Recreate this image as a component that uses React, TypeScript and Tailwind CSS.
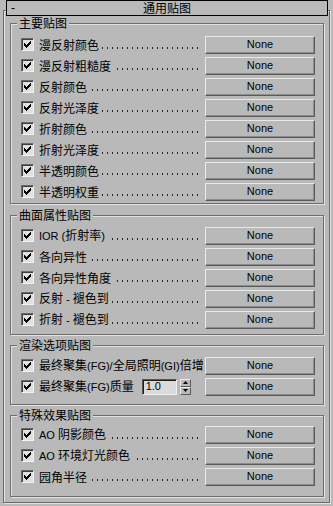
import type { ReactNode } from "react";

const CHECK_PIXELS = [
  "......x",
  ".....xx",
  "x...xxx",
  "xx.xxx.",
  "xxxxx..",
  ".xxx...",
  "..x....",
];

function CheckBox() {
  return (
    <div className="h-[13px] w-[13px] shrink-0 border border-t-[#6a6a6a] border-l-[#6a6a6a] border-b-[#f2f2f2] border-r-[#f2f2f2] bg-[#e0e0e0] shadow-[inset_1px_1px_0_#3e3e3e]">
      <svg width="11" height="11" viewBox="0 0 11 11" className="block">
        {CHECK_PIXELS.map((row, y) =>
          row.split("").map((c, x) =>
            c === "x" ? (
              <rect key={`${x}-${y}`} x={x + 2} y={y + 2} width="1" height="1" fill="#000" />
            ) : null,
          ),
        )}
      </svg>
    </div>
  );
}

function NoneButton() {
  return (
    <button
      type="button"
      className="flex h-[18px] w-[110px] shrink-0 items-center justify-center border border-t-[#e9e9e9] border-l-[#e9e9e9] border-b-[#5a5a5a] border-r-[#5a5a5a] bg-[#b9b9b9] font-['Liberation_Sans',sans-serif] text-[11px] leading-none text-black shadow-[inset_-1px_-1px_0_#8c8c8c]"
    >
      None
    </button>
  );
}

// dotted leader drawn from the right edge so the last dot lines up before the button
function Leader() {
  return (
    <div className="mt-[7px] mr-[7px] ml-[3px] h-[2px] min-w-0 flex-1 bg-[repeating-linear-gradient(to_left,#262626_0_1px,transparent_1px_5px)]" />
  );
}

// latin runs in the labels are set smaller, like the Tahoma text of the original
function Label({ text }: { text: string }) {
  const parts = text.split(/([\x20-\x7E]+)/).filter(Boolean);
  return (
    <span className="ml-[5px] shrink-0 whitespace-pre">
      {parts.map((part, i) =>
        /^[\x20-\x7E]+$/.test(part) ? (
          <span key={i} className="font-['Liberation_Sans',sans-serif] text-[11px]">
            {part}
          </span>
        ) : (
          <span key={i}>{part}</span>
        ),
      )}
    </span>
  );
}

interface MapRowProps {
  label: string;
  dots?: boolean;
  children?: ReactNode;
}

function MapRow({ label, dots = true, children }: MapRowProps) {
  return (
    <div className="flex h-[21px] items-center pr-[8px] pl-[10px]">
      <CheckBox />
      <Label text={label} />
      {children}
      {dots ? <Leader /> : <div className="flex-1" />}
      <NoneButton />
    </div>
  );
}

interface GroupProps {
  title: string;
  className: string;
  children: ReactNode;
}

function Group({ title, className, children }: GroupProps) {
  return (
    <div
      className={`relative ml-[6px] w-[314px] border border-[#6e6e6e] shadow-[inset_1px_1px_0_#e2e2e2,1px_1px_0_#e2e2e2] ${className}`}
    >
      <span className="absolute top-[-9px] left-[6px] bg-[#b9b9b9] px-[2px] leading-[16px]">
        {title}
      </span>
      {children}
    </div>
  );
}

function SpinnerInput() {
  return (
    <div className="ml-[8px] flex items-center">
      <div className="flex h-[16px] w-[35px] items-center border border-t-[#555] border-l-[#555] border-b-[#f0f0f0] border-r-[#f0f0f0] bg-[#dadada] pl-[3px] font-['Liberation_Sans',sans-serif] text-[11px] leading-none shadow-[inset_1px_1px_0_#1e1e1e]">
        1.0
      </div>
      <div className="ml-[3px] flex h-[16px] w-[11px] flex-col">
        <div className="flex h-[8px] items-center justify-center border border-t-[#eaeaea] border-l-[#eaeaea] border-b-[#5a5a5a] border-r-[#5a5a5a]">
          <svg width="5" height="3" viewBox="0 0 5 3" className="block">
            <path d="M2.5 0 L5 3 L0 3 Z" fill="#000" />
          </svg>
        </div>
        <div className="flex h-[8px] items-center justify-center border border-t-[#eaeaea] border-l-[#eaeaea] border-b-[#5a5a5a] border-r-[#5a5a5a]">
          <svg width="5" height="3" viewBox="0 0 5 3" className="block">
            <path d="M0 0 L5 0 L2.5 3 Z" fill="#000" />
          </svg>
        </div>
      </div>
    </div>
  );
}

const MAIN_MAPS = [
  "漫反射颜色",
  "漫反射粗糙度",
  "反射颜色",
  "反射光泽度",
  "折射颜色",
  "折射光泽度",
  "半透明颜色",
  "半透明权重",
];

const SURFACE_MAPS = [
  "IOR (折射率)",
  "各向异性",
  "各向异性角度",
  "反射 - 褪色到",
  "折射 - 褪色到",
];

const EFFECT_MAPS = ["AO 阴影颜色", "AO 环境灯光颜色", "园角半径"];

export default function App() {
  return (
    <div className="h-[506px] w-[333px] overflow-hidden bg-[#b9b9b9] font-['Noto_Sans_CJK_SC','Liberation_Sans',sans-serif] text-[12px] leading-[16px] text-black">
      <div className="relative z-10 ml-[6px] flex h-[16px] w-[322px] items-center border border-black bg-[#b9b9b9]">
        <span className="absolute left-[4px] top-[-1px] font-['Liberation_Sans',sans-serif] text-[12px]">
          -
        </span>
        <span className="w-full text-center leading-[14px]">通用贴图</span>
      </div>

      <div className="-mt-[6px] ml-[3px] h-[493px] w-[327px] border border-[#6a6a6a] pt-[12px] shadow-[inset_1px_1px_0_#e2e2e2,1px_1px_0_#e2e2e2]">
        <Group title="主要贴图" className="pt-[10px] pb-[1px]">
          {MAIN_MAPS.map((label) => (
            <MapRow key={label} label={label} />
          ))}
        </Group>

        <Group title="曲面属性贴图" className="mt-[11px] pt-[9px] pb-[4px]">
          {SURFACE_MAPS.map((label) => (
            <MapRow key={label} label={label} />
          ))}
        </Group>

        <Group title="渲染选项贴图" className="mt-[10px] pt-[9px] pb-[7px]">
          <MapRow label="最终聚集(FG)/全局照明(GI)倍增" dots={false} />
          <MapRow label="最终聚集(FG)质量" dots={false}>
            <SpinnerInput />
          </MapRow>
        </Group>

        <Group title="特殊效果贴图" className="mt-[10px] pt-[8px] pb-[9px]">
          {EFFECT_MAPS.map((label) => (
            <MapRow key={label} label={label} />
          ))}
        </Group>
      </div>
    </div>
  );
}
